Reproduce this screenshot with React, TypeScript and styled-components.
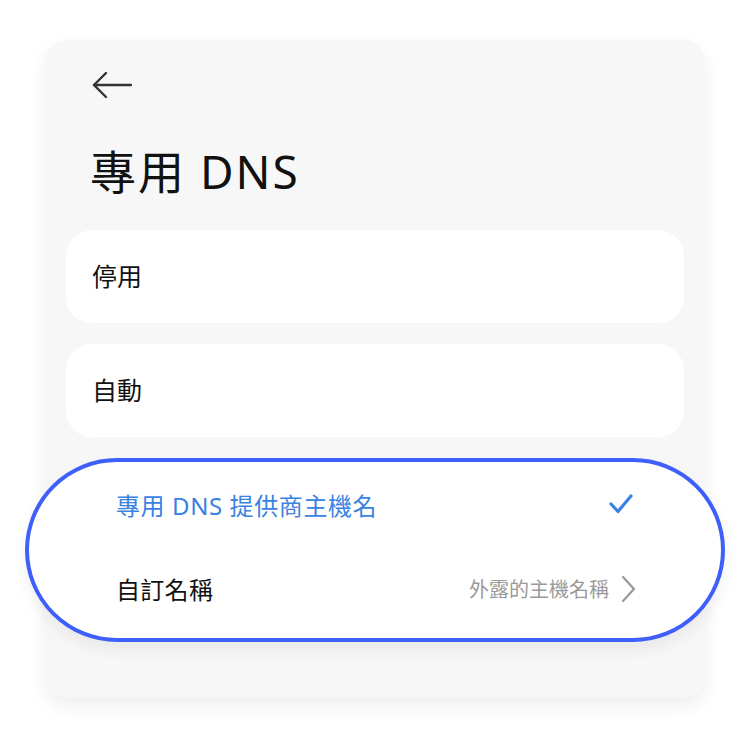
import styled, { createGlobalStyle } from 'styled-components'

const GlobalStyle = createGlobalStyle`
  body {
    margin: 0;
    background: #ffffff;
    font-family: "Noto Sans", "Noto Sans CJK TC", sans-serif;
  }
`;

const Page = styled.div`
  width: 750px;
  height: 740px;
  padding: 40px 0 0 45px;
  box-sizing: border-box;
`;

const Card = styled.div`
  width: 660px;
  height: 658px;
  box-sizing: border-box;
  padding: 25px 21px 0;
  background: #f7f7f7;
  border-radius: 22px;
  box-shadow: 0 8px 18px rgba(0, 0, 0, 0.07);
  display: flex;
  flex-direction: column;
`;

const Header = styled.div`
  display: flex;
  padding-left: 26px;
`;

const BackButton = styled.button`
  width: 40px;
  height: 40px;
  padding: 0;
  border: none;
  background: none;
  display: flex;
  align-items: center;
  justify-content: center;
  color: #333333;
`;

const Title = styled.h1`
  margin: 36px 0 0;
  padding-left: 24px;
  font-size: 46px;
  line-height: 60px;
  font-weight: 400;
  letter-spacing: 2px;
  color: #111111;
`;

const OptionList = styled.div`
  margin-top: 29px;
  display: flex;
  flex-direction: column;
  gap: 21px;
`;

const Option = styled.div`
  height: 93px;
  box-sizing: border-box;
  padding: 0 0 4px 26px;
  display: flex;
  align-items: center;
  background: #ffffff;
  border-radius: 26px;
  font-size: 25px;
  color: #111111;
`;

const HighlightGroup = styled.div`
  margin: 0 -41px;
  height: 184px;
  box-sizing: border-box;
  padding: 0 87px 7px 87px;
  border: 4px solid #3e5ffa;
  border-radius: 999px;
  background: #ffffff;
  box-shadow: 0 8px 16px rgba(0, 0, 0, 0.06);
  display: flex;
  flex-direction: column;
`;

const GroupRow = styled.div<{ $active?: boolean }>`
  flex: 1;
  display: flex;
  align-items: center;
  justify-content: space-between;
  font-size: 24px;
  letter-spacing: ${(p) => (p.$active ? '0.6px' : '0.3px')};
  color: ${(p) => (p.$active ? '#3a82e2' : '#111111')};
`;

const RowValue = styled.div`
  display: flex;
  align-items: center;
  gap: 12px;
  margin-right: -2px;
  font-size: 20px;
  letter-spacing: 0;
  color: #9a9a9a;
`;

function ArrowLeft() {
  return (
    <svg width="40" height="30" viewBox="0 0 40 30" fill="none" stroke="currentColor" strokeWidth="2.4" strokeLinecap="round" strokeLinejoin="round">
      <path d="M2 15 H39" />
      <path d="M14 3 L2 15 L14 27" />
    </svg>
  );
}

function Check() {
  return (
    <svg width="26" height="22" viewBox="0 0 26 22" fill="none" stroke="#3a82e2" strokeWidth="3.2" strokeLinecap="round" strokeLinejoin="round">
      <path d="M3 11 L10 18.5 L23 3" />
    </svg>
  );
}

function Chevron() {
  return (
    <svg width="15" height="28" viewBox="0 0 15 28" fill="none" stroke="#999999" strokeWidth="2.2" strokeLinecap="round" strokeLinejoin="round">
      <path d="M2 2 L13 14 L2 26" />
    </svg>
  );
}

export default function App() {
  return (
    <Page>
      <GlobalStyle />
      <Card>
        <Header>
          <BackButton aria-label="返回">
            <ArrowLeft />
          </BackButton>
        </Header>
        <Title>專用 DNS</Title>
        <OptionList>
          <Option>停用</Option>
          <Option>自動</Option>
          <HighlightGroup>
            <GroupRow $active>
              <span>專用 DNS 提供商主機名</span>
              <Check />
            </GroupRow>
            <GroupRow>
              <span>自訂名稱</span>
              <RowValue>
                外露的主機名稱
                <Chevron />
              </RowValue>
            </GroupRow>
          </HighlightGroup>
        </OptionList>
      </Card>
    </Page>
  )
}
